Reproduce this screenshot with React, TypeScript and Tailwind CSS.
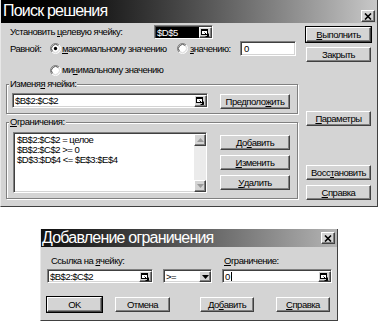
import React from 'react';
import clsx from 'clsx';

const raised =
  'bg-[#d4d4d4] border border-t-white border-l-white border-r-[#404040] border-b-[#404040] shadow-[inset_-1px_-1px_0_#808080]';
const sunken =
  'border border-t-[#808080] border-l-[#808080] border-r-white border-b-white shadow-[inset_1px_1px_0_#404040,inset_-1px_-1px_0_#d4d4d4]';
const etched = 'border border-[#808080] shadow-[inset_1px_1px_0_#fff,1px_1px_0_#fff]';

// underline the access-key letter
function mn(text: string, at: number) {
  return (
    <>
      {text.slice(0, at)}
      <span className="underline underline-offset-[1px]">{text[at]}</span>
      {text.slice(at + 1)}
    </>
  );
}

function Button({
  children,
  className,
  isDefault,
}: {
  children: React.ReactNode;
  className?: string;
  isDefault?: boolean;
}) {
  return (
    <div
      className={clsx(
        raised,
        'flex h-[15px] shrink-0 items-center justify-center',
        isDefault && 'outline outline-1 outline-black',
        className,
      )}
    >
      {children}
    </div>
  );
}

function RefButton() {
  return (
    <div className={clsx(raised, 'flex h-full w-[13px] shrink-0 items-center justify-center')}>
      <svg width="9" height="8" viewBox="0 0 9 8">
        <rect x="0.5" y="0.5" width="6" height="5" fill="#fff" stroke="#000" />
        <rect x="0" y="0" width="7" height="2" fill="#000" />
        <path d="M3.5 3.5 L7.5 7.5 M7.5 4.5 V7.5 H4.5" stroke="#000" fill="none" />
      </svg>
    </div>
  );
}

function Radio({ checked }: { checked?: boolean }) {
  return (
    <svg width="11" height="11" viewBox="0 0 12 12" className="shrink-0">
      <circle cx="6" cy="6" r="5" fill="#fff" />
      <path d="M2.11 9.89 A5.5 5.5 0 0 1 9.89 2.11" stroke="#808080" fill="none" />
      <path d="M2.82 9.18 A4.5 4.5 0 0 1 9.18 2.82" stroke="#404040" fill="none" />
      <path d="M9.89 2.11 A5.5 5.5 0 0 1 2.11 9.89" stroke="#fff" fill="none" />
      <path d="M9.18 2.82 A4.5 4.5 0 0 1 2.82 9.18" stroke="#d4d4d4" fill="none" />
      {checked && <circle cx="6" cy="6" r="1.8" fill="#000" />}
    </svg>
  );
}

function CloseButton({ className }: { className?: string }) {
  return (
    <div className={clsx(raised, 'flex h-[12px] w-[14px] shrink-0 items-center justify-center', className)}>
      <svg width="8" height="7" viewBox="0 0 8 7">
        <path d="M1 0.5 L7 6.5 M7 0.5 L1 6.5" stroke="#000" strokeWidth="1.6" />
      </svg>
    </div>
  );
}

function ScrollArrow({ down }: { down?: boolean }) {
  return (
    <div className={clsx(raised, 'flex h-[12px] w-full shrink-0 items-center justify-center')}>
      <svg width="7" height="4" viewBox="0 0 7 4">
        <path d={down ? 'M0 0 H7 L3.5 4 Z' : 'M0 4 H7 L3.5 0 Z'} fill="#9a9a9a" />
      </svg>
    </div>
  );
}

const titleText = 'text-[16px] leading-[18px] tracking-[-0.8px] text-white';

function SolverDialog() {
  return (
    <div className="flex h-[207px] w-[378px] flex-col border-b border-l border-r border-b-[#404040] border-l-[#e8e8e8] border-r-[#404040] bg-[#d4d4d4]">
      <div className="flex h-[23px] shrink-0 items-center bg-linear-to-r from-black to-[#c8c8c8] pl-[2px] pr-[2px]">
        <span className={clsx(titleText, '-mt-[2px]')}>Поиск решения</span>
        <CloseButton className="ml-auto mt-[9px]" />
      </div>

      <div className="flex flex-1">
        <div className="flex w-[300px] flex-col">
          <div className="mt-[2px] flex h-[14px] items-center">
            <span className="w-[153px] pl-[9px]">Установить {mn('целевую', 0)} ячейку:</span>
            <div className={clsx(sunken, 'flex h-[14px] w-[59px] bg-white pl-[1px] pt-[1px]')}>
              <div className="flex flex-1 items-center bg-black pl-[1px] text-white">$D$5</div>
              <RefButton />
            </div>
          </div>

          <div className="mt-[2px] flex h-[15px] items-center pl-[9px]">
            <span className="w-[40px]">Равной:</span>
            <div className="flex w-[127px] items-center gap-[1px]">
              <Radio checked />
              <span>{mn('максимальному', 0)} значению</span>
            </div>
            <div className="flex w-[63px] items-center gap-[2px]">
              <Radio />
              <span>{mn('значению:', 0)}</span>
            </div>
            <div className={clsx(sunken, 'flex h-[15px] w-[56px] items-center bg-white pl-[3px]')}>0</div>
          </div>

          <div className="mt-[8px] flex h-[12px] items-center gap-[1px] pl-[49px]">
            <Radio />
            <span>ми{mn('нимальному', 0)} значению</span>
          </div>

          <fieldset className={clsx(etched, 'ml-[5px] mt-[2px] w-[292px]')}>
            <legend className="ml-[2px] bg-[#d4d4d4] px-[1px]">Изменя{mn('я', 0)} ячейки:</legend>
            <div className="mt-[3px] flex items-start pb-[4px] pl-[5px]">
              <div className={clsx(sunken, 'flex h-[15px] w-[196px] bg-white pl-[2px] pt-[1px]')}>
                <span className="flex flex-1 items-center">$B$2:$C$2</span>
                <RefButton />
              </div>
              <Button className="ml-[12px] mt-[1px] w-[70px]">Предполо{mn('жить', 0)}</Button>
            </div>
          </fieldset>

          <fieldset className={clsx(etched, 'ml-[5px] mt-[2px] w-[292px]')}>
            <legend className="ml-[2px] bg-[#d4d4d4] px-[1px]">{mn('Ограничения:', 0)}</legend>
            <div className="mt-[4px] flex items-start pb-[5px] pl-[6px]">
              <div className={clsx(sunken, 'flex h-[61px] w-[194px] bg-white pl-[1px] pt-[1px]')}>
                <div className="flex flex-1 flex-col pl-[2px] pt-[1px] leading-[10px]">
                  <span>$B$2:$C$2 = целое</span>
                  <span>{'$B$2:$C$2 >= 0'}</span>
                  <span>{'$D$3:$D$4 <= $E$3:$E$4'}</span>
                </div>
                <div className="flex w-[12px] flex-col bg-[#ebebeb]">
                  <ScrollArrow />
                  <div className="flex-1" />
                  <ScrollArrow down />
                </div>
              </div>
              <div className="ml-[13px] mt-[3px] flex flex-col gap-[5px]">
                <Button className="w-[70px]">До{mn('бавить', 0)}</Button>
                <Button className="w-[70px]">{mn('Изменить', 0)}</Button>
                <Button className="w-[70px]">{mn('Удалить', 0)}</Button>
              </div>
            </div>
          </fieldset>
        </div>

        <div className="ml-[5px] flex w-[65px] flex-col">
          <Button isDefault className="mt-[4px] w-full">
            {mn('Выполнить', 0)}
          </Button>
          <Button className="mt-[5px] w-full">Закрыть</Button>
          <Button className="mt-[49px] w-full">{mn('Параметры', 0)}</Button>
          <Button className="mt-[39px] w-full">Восс{mn('тановить', 0)}</Button>
          <Button className="mt-[5px] w-full">{mn('Справка', 0)}</Button>
        </div>
      </div>
    </div>
  );
}

function AddConstraintDialog() {
  return (
    <div className="ml-[40px] mt-[22px] flex h-[92px] w-[298px] flex-col border-b border-l border-r border-b-[#404040] border-l-[#e8e8e8] border-r-[#404040] bg-[#d4d4d4]">
      <div className="flex h-[18px] shrink-0 items-center bg-linear-to-r from-[#101010] to-[#b4b4b4] pl-[1px] pr-[2px]">
        <span className={titleText}>Добавление ограничения</span>
        <CloseButton className="ml-auto" />
      </div>

      <div className="mt-[8px] grid grid-cols-[106px_49px_110px] gap-x-[10px] gap-y-[2px] pl-[6px]">
        <span className="pl-[4px]">Ссылка на {mn('ячейку:', 0)}</span>
        <span />
        <span className="pl-[2px]">{mn('Ограничение:', 0)}</span>

        <div className={clsx(sunken, 'flex h-[14px] bg-white pl-[2px] pt-[1px]')}>
          <span className="flex flex-1 items-center">$B$2:$C$2</span>
          <RefButton />
        </div>
        <div className={clsx(sunken, 'flex h-[14px] bg-white pl-[2px] pt-[1px]')}>
          <span className="flex flex-1 items-center">{'>='}</span>
          <div className={clsx(raised, 'flex h-full w-[12px] items-center justify-center')}>
            <svg width="7" height="4" viewBox="0 0 7 4">
              <path d="M0 0 H7 L3.5 4 Z" fill="#000" />
            </svg>
          </div>
        </div>
        <div className={clsx(sunken, 'flex h-[14px] bg-white pl-[2px] pt-[1px]')}>
          <span className="flex flex-1 items-center">
            0<span className="ml-[1px] h-[9px] w-[1px] bg-black" />
          </span>
          <RefButton />
        </div>
      </div>

      <div className="mt-[14px] flex pl-[6px]">
        <Button isDefault className="w-[55px]">
          OK
        </Button>
        <Button className="ml-[13px] w-[55px]">Отмена</Button>
        <Button className="ml-[30px] w-[54px]">До{mn('бавить', 0)}</Button>
        <Button className="ml-[22px] w-[54px]">{mn('Справка', 0)}</Button>
      </div>
    </div>
  );
}

export default function App() {
  return (
    <div className="h-[321px] w-[378px] overflow-hidden bg-white font-['Liberation_Sans',Arial,sans-serif] text-[9.5px] leading-[12px] tracking-[-0.5px] text-black">
      <SolverDialog />
      <AddConstraintDialog />
    </div>
  );
}
